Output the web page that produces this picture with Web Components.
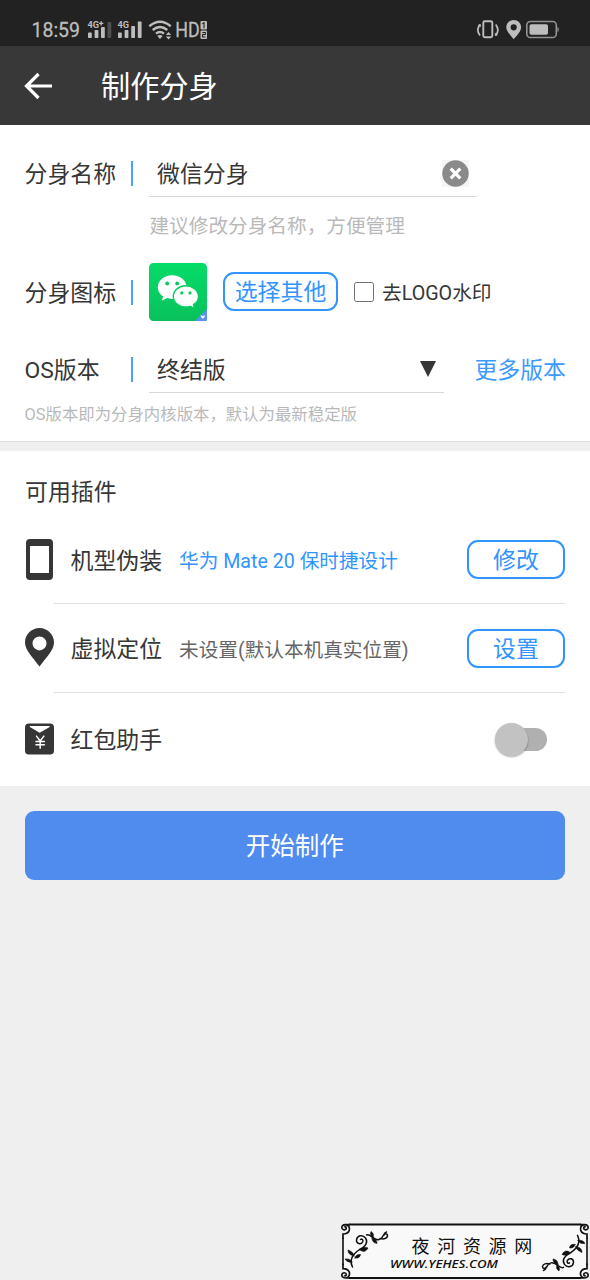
<!DOCTYPE html>
<html lang="zh-CN">
<head>
<meta charset="utf-8">
<title>制作分身</title>
<style>
  html, body { margin: 0; height: 100%; }
  body { background: #efefef; font-family: Roboto, "Noto Sans CJK SC", sans-serif; color: #363636; overflow: hidden; }
</style>
</head>
<body>
<clone-app></clone-app>
<script>
const define = (name, html) => customElements.define(name, class extends HTMLElement {
  constructor() {
    super();
    const t = document.createElement('template');
    t.innerHTML = html;
    this.attachShadow({ mode: 'open' }).append(t.content.cloneNode(true));
  }
});

define('status-bar', `
<style>
  :host { display: flex; justify-content: space-between; height: 46px; background: #222; color: #bdbdbd; }
  svg { display: block; height: 46px; }
  text { font-family: Roboto, sans-serif; fill: #bdbdbd; }
</style>
<svg width="230" viewBox="0 0 230 46" fill="#bdbdbd">
  <text x="31.5" y="37.4" font-size="20.5" stroke="#bdbdbd" stroke-width=".3" textLength="48.5" lengthAdjust="spacingAndGlyphs">18:59</text>
  <text x="87.5" y="27.8" font-size="9" font-weight="700" textLength="11.500" lengthAdjust="spacingAndGlyphs">4G</text>
  <path d="M99 22.700h4.400v1.400H99zM100.500 21.200h1.400v4.400h-1.400z"/>
  <rect x="88" y="32.500" width="3.800" height="5.500" rx=".8"/><rect x="94.600" y="30" width="3.800" height="8" rx=".8"/><rect x="101" y="27" width="3.800" height="11" rx=".8"/><rect x="107.500" y="22" width="3.800" height="16" rx=".8" fill="#505050"/>
  <text x="117.500" y="27.800" font-size="9" font-weight="700" textLength="11.500" lengthAdjust="spacingAndGlyphs">4G</text>
  <rect x="118" y="32.500" width="3.800" height="5.500" rx=".8"/><rect x="124.600" y="30" width="3.800" height="8" rx=".8"/><rect x="131.200" y="26" width="3.800" height="12" rx=".8"/><rect x="137.800" y="21.500" width="3.800" height="16.500" rx=".8"/>
  <g fill="none" stroke="#bdbdbd" stroke-width="2.400"><path d="M149.300 26.200q10.700-8.800 21.400 0M152.700 30q7.300-6.200 14.600 0M156 33.700q4-3.400 8 0"/></g>
  <path d="M157.300 36q2.700-1.800 5.400 0l-2.700 3zM165.800 35l2.700-3 2.700 3zM165.800 36.600h5.400l-2.700 3z"/>
  <text x="175.300" y="37.200" font-size="20" stroke="#bdbdbd" stroke-width=".3" textLength="24.500" lengthAdjust="spacingAndGlyphs">HD</text>
  <rect x="200.500" y="21" width="6.500" height="8.500" rx="1"/><rect x="200.500" y="30.500" width="6.500" height="8.500" rx="1"/>
  <g fill="none" stroke="#222" stroke-width="1.100"><path d="M202.400 23.700l1.600-1v5.500M202.300 32.500h3v2h-2.700v2.500h3"/></g>
</svg>
<svg width="130" viewBox="460 0 130 46" fill="none" stroke="#bdbdbd">
  <rect x="483.300" y="21.300" width="9" height="16" rx="1.500" stroke-width="1.900"/>
  <path d="M480 24.500q-4.400 5.500 0 11M495.700 24.500q4.400 5.500 0 11" stroke-width="1.700"/>
  <path d="M477.800 25l3-1v3.200zM497.900 35l-3 1v-3.200z" fill="#bdbdbd" stroke="none"/>
  <path fill-rule="evenodd" fill="#bdbdbd" stroke="none" d="M513.700 20c4.200 0 7.400 3.200 7.400 7.200 0 4.200-4.600 8.400-7.400 12-2.800-3.600-7.400-7.800-7.400-12 0-4 3.200-7.200 7.400-7.200zm0 4.200a3.100 3.100 0 100 6.200 3.100 3.100 0 000-6.200z"/>
  <rect x="526.800" y="21.500" width="29.500" height="16" rx="3.600" stroke="#929292" stroke-width="1.600"/>
  <rect x="529.500" y="24.300" width="18.500" height="10.500" rx="1.800" fill="#bdbdbd" stroke="none"/>
  <path d="M557.400 27v5l1.300-1v-3z" fill="#929292" stroke="none"/>
</svg>`);

define('app-bar', `
<style>
  :host { display: flex; align-items: center; height: 79px; background: #383838; color: #fff; padding-left: 24px; }
  h1 { margin: 0 0 0 49px; padding-top: 2px; font-size: 29.200px; line-height: 40px; font-weight: 400; }
</style>
<svg width="28" height="28" viewBox="0 0 28 28" fill="none" stroke="#fff" stroke-width="3.200"><path d="M28 14H3M14.500 2L2.500 14l12 12"/></svg>
<h1><slot></slot></h1>`);

define('form-row', `
<style>
  :host { display: flex; align-items: center; font-size: 22.900px; line-height: 34px; white-space: nowrap; }
  .label { width: 106.500px; margin-left: -.5px; padding-top: 3px; }
  .bar { width: 2px; height: 25px; background: #4aa2ff; margin-right: 16px; }
</style>
<span class="label"><slot name="label"></slot></span><span class="bar"></span><slot></slot>`);

define('line-field', `
<style>
  :host { display: flex; align-items: center; justify-content: space-between; box-sizing: border-box; height: 47px; padding: 0 8px; border-bottom: 1px solid #d8d8d8; }
  span { padding-top: 4px; }
</style>
<span><slot></slot></span><slot name="end"></slot>`);

define('outline-button', `
<style>
  :host { display: flex; align-items: center; justify-content: center; box-sizing: border-box; height: 39px; margin-bottom: 1px; padding-top: 3px; border: 2px solid #3294ff; border-radius: 11px; color: #3294ff; font-size: 22.900px; line-height: 34px; white-space: nowrap; }
</style>
<slot></slot>`);

define('chat-logo', `
<style>:host { display: block; width: 58px; height: 58px; } svg { display: block; }</style>
<svg width="58" height="58" viewBox="0 0 58 58">
  <defs><linearGradient id="g" x2="0" y2="1"><stop stop-color="#05dc68"/><stop offset="1" stop-color="#09c15c"/></linearGradient></defs>
  <path d="M4.500 0h49a4.500 4.500 0 014.500 4.500V57l-1 1H4.500A4.500 4.500 0 010 53.500v-49A4.500 4.500 0 014.500 0z" fill="url(#g)"/>
  <path d="M46 58L58 46v11l-1 1z" fill="#5b8ff0"/>
  <path d="M51.500 52l2.300 1.200L56 52l-.6 2.200-1.600 1.600-1.600-1.600z" fill="#fff"/>
  <path fill="#fff" d="M23.200 12.200c-8 0-14.400 5.300-14.400 12 0 3.800 2.100 7.100 5.300 9.300l-1.300 4.200 5.200-2.600c1.600.5 3.400.8 5.200.8 8 0 14.400-5.200 14.400-11.700s-6.400-12-14.400-12z"/>
  <path fill="#fff" stroke="#07cf62" stroke-width="1.400" d="M36.900 22.800c-7 0-12.600 4.700-12.600 10.600s5.600 10.600 12.600 10.600c1.600 0 3-.2 4.400-.7l4.200 2.300-1-3.900c3-2 5-4.900 5-8.300 0-5.900-5.600-10.600-12.600-10.600z"/>
  <g fill="#08ca60"><circle cx="18.200" cy="20.500" r="1.900"/><circle cx="28.200" cy="20.500" r="1.900"/><circle cx="32.800" cy="29.900" r="1.600"/><circle cx="41" cy="29.900" r="1.600"/></g>
</svg>`);

define('check-option', `
<style>
  :host { display: flex; align-items: center; font-size: 19.700px; line-height: 30px; white-space: nowrap; }
  i { box-sizing: border-box; width: 20px; height: 20px; border: 1.500px solid #707070; border-radius: 2.500px; margin-right: 8px; }
  span { padding-top: 4px; }
</style>
<i></i><span><slot></slot></span>`);

define('settings-panel', `
<style>
  :host { display: block; box-sizing: border-box; height: 317px; padding: 25px 24px 0 25px; background: #fff; border-bottom: 1px solid #dcdcdc; }
  .hint { color: #b9b9b9; white-space: nowrap; }
  .name-hint { font-size: 19.650px; line-height: 60px; padding-left: 124.500px; height: 66px; }
  .os-hint { font-size: 16.400px; line-height: 44px; margin-left: -.5px; }
  .name { width: 328px; }
  .os { width: 295px; }
  .icon-row { height: 58px; margin-bottom: 25px; }
  .pick { width: 115px; margin: 0 16px 1px; }
  .more { color: #3c9aff; margin-left: auto; padding-top: 3px; }
  svg { display: block; }
</style>
<form-row><span slot="label">分身名称</span>
  <line-field class="name">微信分身
    <svg slot="end" width="27" height="27" viewBox="0 0 27 27"><rect width="27" height="27" fill="#f5f5f5"/><circle cx="13.500" cy="13.500" r="13.200" fill="#8a8a8a"/><path d="M8.700 8.700l9.600 9.600M18.300 8.700l-9.600 9.600" stroke="#fff" stroke-width="3.300"/></svg>
  </line-field>
</form-row>
<div class="hint name-hint">建议修改分身名称，方便管理</div>
<form-row class="icon-row"><span slot="label">分身图标</span>
  <chat-logo></chat-logo><outline-button class="pick">选择其他</outline-button><check-option>去LOGO水印</check-option>
</form-row>
<form-row><span slot="label">OS版本</span>
  <line-field class="os">终结版
    <svg slot="end" width="16" height="16" viewBox="0 0 16 16"><path d="M0 0h16L8 16z" fill="#363636"/></svg>
  </line-field>
  <span class="more">更多版本</span>
</form-row>
<div class="hint os-hint">OS版本即为分身内核版本，默认为最新稳定版</div>`);

define('plugin-row', `
<style>
  :host { display: flex; align-items: center; height: var(--row-height, 88px); font-size: 22.900px; line-height: 34px; white-space: nowrap;
    background: linear-gradient(#dedede, #dedede) 29px 100% / calc(100% - 29px) var(--rule, 1px) no-repeat; }
  .icon { display: flex; width: 29px; justify-content: center; margin-right: 16.500px; padding-bottom: 2px; }
  .name { width: 108.500px; padding-top: 3px; }
  .detail { font-size: 19.650px; padding-top: 4px; color: var(--detail, #666); }
  .action { margin-left: auto; }
</style>
<span class="icon"><slot name="icon"></slot></span><span class="name"><slot></slot></span><span class="detail"><slot name="detail"></slot></span><span class="action"><slot name="action"></slot></span>`);

define('toggle-switch', `
<style>
  :host { display: flex; align-items: center; width: 53px; height: 34px; margin-right: 18px; }
  .knob { width: 33px; height: 33px; border-radius: 50%; background: #c2c2c2; box-shadow: 0 1px 2px #0005; z-index: 1; margin-left: 1px; }
  .track { width: 36px; height: 23px; margin-left: -17px; border-radius: 0 12px 12px 0; background: #b0b0b0; }
</style>
<span class="knob"></span><span class="track"></span>`);

define('plugin-panel', `
<style>
  :host { display: block; box-sizing: border-box; height: 335px; margin-top: 9px; padding: 17px 25px 0; background: #fff; }
  h2 { margin: 0; padding-top: 1px; font-size: 22.900px; line-height: 48px; height: 47px; font-weight: 400; }
  .model { --detail: #3294ff; }
  .place { --row-height: 89px; }
  .gift { --row-height: 93px; --rule: 0px; }
  outline-button { width: 98px; }
  svg { display: block; }
</style>
<h2>可用插件</h2>
<plugin-row class="model">
  <svg slot="icon" width="27" height="41" viewBox="0 0 27 41"><path fill="#363636" fill-rule="evenodd" d="M4 0h19a4 4 0 014 4v33a4 4 0 01-4 4H4a4 4 0 01-4-4V4a4 4 0 014-4zm0 7v27h19V7z"/></svg>
  机型伪装<span slot="detail">华为 Mate 20 保时捷设计</span><outline-button slot="action">修改</outline-button>
</plugin-row>
<plugin-row class="place">
  <svg slot="icon" width="29" height="39" viewBox="0 0 29 39"><path fill="#363636" fill-rule="evenodd" d="M14.500 0C22.500 0 29 6.500 29 14.500 29 22 22 28.500 14.500 38.500 7 28.500 0 22 0 14.500 0 6.500 6.500 0 14.500 0zm0 8.400a7 7 0 100 14 7 7 0 000-14z"/></svg>
  虚拟定位<span slot="detail">未设置(默认本机真实位置)</span><outline-button slot="action">设置</outline-button>
</plugin-row>
<plugin-row class="gift">
  <svg slot="icon" width="30" height="32" viewBox="0 0 30 32"><rect width="30" height="32" rx="4" fill="#363636"/><path d="M5 2.500h20.500v1L15.200 9.500 5 3.500z" fill="#fff"/><path d="M11.500 12.500l4.200 5.500 4.200-5.500M15.700 18v8M10.800 18.500h9.800M10.800 22h9.800" fill="none" stroke="#fff" stroke-width="1.500"/></svg>
  红包助手<toggle-switch slot="action"></toggle-switch>
</plugin-row>`);

define('primary-button', `
<style>
  :host { display: block; box-sizing: border-box; margin: 25px 25px 0 24.500px; height: 69px; padding-top: 1px; border-radius: 9px; background: #4f8cee; color: #fff; font-size: 24.500px; line-height: 69px; text-align: center; }
</style>
<slot></slot>`);

define('site-badge', `
<style>
  :host { position: absolute; left: 340px; top: 1222px; width: 250px; height: 58px; }
  svg { display: block; }
  .cn { font-family: "Noto Sans CJK SC", sans-serif; font-size: 18px; }
  .url { font-family: "Open Sans", "Liberation Sans", sans-serif; font-size: 10.500px; font-style: italic; font-weight: 600; }
</style>
<svg width="250" height="58" viewBox="0 0 250 58">
  <defs>
    <g id="corner" fill="none" stroke="#111"><path stroke-width="1.700" d="M10 2.600H5.500C2.500 2.600 1.400 4.500 2 6.300c.8 2.200 4.200 2 4.300-.2 0-1.300-1.300-1.700-2-.9M5.500 2.600C9 3 10 6 9.300 8.300 8.500 11 6 12 3 12v5"/></g>
    <g id="vine" fill="none" stroke="#111" stroke-width="1.500" stroke-linecap="round">
      <path d="M12.500 45c-3-6-1-12 7-17.500 6-3 9-7 6-11.500-3-4-8.500-2.500-9 2-.2 4 4.500 5 6.200 1.800.8-2-.8-3.300-2.200-2.300M26.500 13c4-2 7 6 12.500 4.500s3.500-6.500 7.500-7.500M40 16.500c4 1 7 0 7.500-2.500.2-2.500-3-3-3.500-.8"/>
      <path fill="#111" stroke-width=".6" d="M14 34c-4.500-1-6-3-6-6 3.500 1.500 6 3 6 6zM12 40c-3.500.5-5.500-.5-7-3 3.500-.5 6 .5 7 3zM15 36c3 .5 5-.5 5.500-3.500-3-.5-5 .8-5.500 3.500zM20 28c3.500 2.500 6 1.500 8-2-3-1.500-6-1-8 2zM33 15.500c-2.500-1.500-3-4-2-6 2.500 1.500 3 3.500 2 6zM32 16c0 3 1.500 5 5 5.500 0-3-1.500-5-5-5.500z"/>
    </g>
  </defs>
  <path d="M9 2.600H241L247 9V49L241 56H9L3 49V12z" fill="#f9f9f9"/>
  <path d="M9 2.600H241M9 56H241" stroke="#111" stroke-width="2"/><path d="M3 16V43M247 16V43" stroke="#111" stroke-width="1.600"/>
  <use href="#corner"/><use href="#corner" transform="matrix(-1 0 0 1 250 0)"/><use href="#corner" transform="matrix(1 0 0 -1 0 58.600)"/><use href="#corner" transform="matrix(-1 0 0 -1 250 58.600)"/>
  <use href="#vine"/><use href="#vine" transform="rotate(180 125 29.200)"/>
  <text class="cn" x="71.500" y="31" letter-spacing="7.700" fill="#111">夜河资源网</text>
  <text class="url" x="50" y="46.300" fill="#111" textLength="108" lengthAdjust="spacingAndGlyphs">WWW.YEHES.COM</text>
</svg>`);

define('clone-app', `
<style>:host { display: block; position: relative; height: 1280px; overflow: hidden; }</style>
<status-bar></status-bar>
<app-bar>制作分身</app-bar>
<settings-panel></settings-panel>
<plugin-panel></plugin-panel>
<primary-button>开始制作</primary-button>
<site-badge></site-badge>`);
</script>
</body>
</html>
